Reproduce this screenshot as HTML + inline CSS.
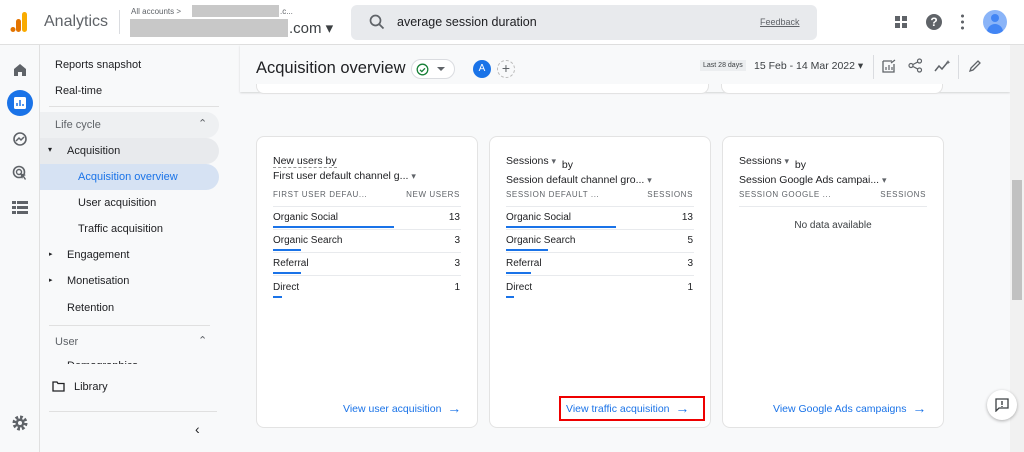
<!DOCTYPE html><html><head><style>
*{box-sizing:border-box;margin:0;padding:0}
body{width:1024px;height:452px;overflow:hidden;font-family:"Liberation Sans",Arial,sans-serif;background:#f8f9fa;position:relative;color:#202124}
.abs{position:absolute}
.hdr{left:0;top:0;width:1024px;height:45px;background:#fff;border-bottom:1px solid #e0e0e0}
.rail{left:0;top:45px;width:40px;height:407px;background:#f8f9fa;border-right:1px solid #e0e0e0}
.side{left:40px;top:45px;width:200px;height:407px;background:#f8f9fa}
.side div.it{position:absolute;font-size:11px;color:#202124}
.card{position:absolute;background:#fff;border:1px solid #e3e3e3;border-radius:8px;top:136px;width:222px;height:292px}
.t{position:absolute;font-size:10px;color:#202124}
.h{position:absolute;font-size:8px;letter-spacing:.6px;color:#5f6368}
.ln{position:absolute;height:1px;background:#e8eaed;left:16px;width:188px}
.bar{position:absolute;height:2px;background:#1a73e8;left:16px}
.lk{position:absolute;font-size:10.5px;color:#1a73e8;top:266px;line-height:12px}
.lk b{font-weight:normal;font-size:14px;line-height:12px;vertical-align:top;position:relative;top:-1px}
</style></head><body>
<div class="abs hdr"></div>
<svg class="abs" style="left:10px;top:11px" width="20" height="22"><rect x="12" y="1" width="5" height="20" rx="2.5" fill="#f9ab00"/><rect x="6" y="8" width="5" height="13" rx="2.5" fill="#e37400"/><circle cx="3" cy="18.5" r="2.5" fill="#e37400"/></svg>
<div class="abs" style="left:44px;top:13px;font-size:16px;color:#5f6368">Analytics</div>
<div class="abs" style="left:119px;top:10px;width:1px;height:24px;background:#dadce0"></div>
<div class="abs" style="left:131px;top:7px;font-size:8px;color:#5f6368">All accounts &gt;</div>
<div class="abs" style="left:192px;top:5px;width:87px;height:12px;background:#c8c8c8"></div>
<div class="abs" style="left:280px;top:7px;font-size:8px;color:#5f6368">.c...</div>
<div class="abs" style="left:130px;top:19px;width:158px;height:18px;background:#c8c8c8"></div>
<div class="abs" style="left:289px;top:19px;font-size:15px;color:#3c4043">.com ▾</div>
<div class="abs" style="left:351px;top:5px;width:466px;height:35px;background:#e8eaed;border-radius:6px"></div>
<svg class="abs" style="left:369px;top:14px" width="16" height="16"><circle cx="6.5" cy="6.5" r="5" stroke="#5f6368" stroke-width="1.7" fill="none"/><path d="M10 10l4.5 4.5" stroke="#5f6368" stroke-width="1.8"/></svg>
<div class="abs" style="left:397px;top:15px;font-size:12.5px;color:#202124">average session duration</div>
<div class="abs" style="left:760px;top:17px;font-size:9px;color:#5f6368;text-decoration:underline">Feedback</div>
<svg class="abs" style="left:895px;top:16px" width="12" height="12" fill="#5f6368"><rect width="5" height="5"/><rect x="7" width="5" height="5"/><rect y="7" width="5" height="5"/><rect x="7" y="7" width="5" height="5"/></svg>
<div class="abs" style="left:926px;top:14px;width:16px;height:16px;border-radius:50%;background:#5f6368;color:#fff;font-size:12px;font-weight:bold;text-align:center;line-height:16px">?</div>
<div class="abs" style="left:961px;top:13px;width:3px;height:18px;background:radial-gradient(circle,#5f6368 1.4px,transparent 1.6px) 0 0/3px 6px"></div>
<div class="abs" style="left:983px;top:10px;width:24px;height:24px;border-radius:50%;background:#8ab4f8;overflow:hidden"><div style="position:absolute;left:8px;top:4px;width:8px;height:8px;border-radius:50%;background:#4285f4"></div><div style="position:absolute;left:4px;top:14px;width:16px;height:12px;border-radius:8px 8px 0 0;background:#4285f4"></div></div>
<div class="abs rail"></div>
<svg class="abs" style="left:12px;top:62px" width="16" height="16"><path d="M2 7L8 2l6 5v7H10V10H6v4H2z" fill="#5f6368"/></svg>
<div class="abs" style="left:7px;top:90px;width:26px;height:26px;border-radius:50%;background:#1a73e8"><svg width="26" height="26"><rect x="7" y="7" width="12" height="12" rx="1.5" fill="#fff"/><path d="M10 16v-3M13 16v-6M16 16v-2" stroke="#1a73e8" stroke-width="1.5"/></svg></div>
<svg class="abs" style="left:12px;top:131px" width="16" height="16"><circle cx="8" cy="8" r="6" stroke="#5f6368" stroke-width="1.6" fill="none"/><path d="M4 10l3-3 2 2 3-3" stroke="#5f6368" stroke-width="1.5" fill="none"/></svg>
<svg class="abs" style="left:12px;top:165px" width="16" height="16"><circle cx="7" cy="7" r="5.5" stroke="#5f6368" stroke-width="1.6" fill="none"/><circle cx="7" cy="7" r="2.5" stroke="#5f6368" stroke-width="1.4" fill="none"/><path d="M8 8l6 2-2 1 2 3-1 1-2-3-1 2z" fill="#5f6368"/></svg>
<svg class="abs" style="left:12px;top:201px" width="16" height="14" fill="#5f6368"><rect width="16" height="3"/><rect y="5" width="16" height="3"/><rect y="10" width="16" height="3"/><rect x="4" width="1" height="13" fill="#f8f9fa"/></svg>
<svg class="abs" style="left:11px;top:414px" width="18" height="18"><circle cx="9" cy="9" r="5.5" fill="none" stroke="#5f6368" stroke-width="4" stroke-dasharray="2.5 1.8"/><circle cx="9" cy="9" r="4.5" fill="#5f6368"/><circle cx="9" cy="9" r="2" fill="#f8f9fa"/></svg>
<div class="abs side">
<div class="it" style="left:15px;top:14px">Reports snapshot</div>
<div class="it" style="left:15px;top:40px">Real-time</div>
<div style="position:absolute;left:9px;top:61px;width:170px;height:1px;background:#e0e0e0"></div>
<div style="position:absolute;left:0;top:67px;width:179px;height:26px;background:#eef0f2;border-radius:0 13px 13px 0"></div>
<div class="it" style="left:15px;top:74px;color:#5f6368">Life cycle</div><div class="it" style="left:158px;top:72px;color:#5f6368">⌃</div>
<div style="position:absolute;left:0;top:93px;width:179px;height:26px;background:#e8eaed;border-radius:0 13px 13px 0"></div>
<div class="it" style="left:8px;top:100px;font-size:8px">▾</div><div class="it" style="left:27px;top:100px">Acquisition</div>
<div style="position:absolute;left:0;top:119px;width:179px;height:26px;background:#d6e2f3;border-radius:0 13px 13px 0"></div>
<div class="it" style="left:38px;top:126px;color:#1a73e8">Acquisition overview</div>
<div class="it" style="left:38px;top:152px">User acquisition</div>
<div class="it" style="left:38px;top:178px">Traffic acquisition</div>
<div class="it" style="left:9px;top:205px;font-size:7px">▸</div><div class="it" style="left:27px;top:204px">Engagement</div>
<div class="it" style="left:9px;top:231px;font-size:7px">▸</div><div class="it" style="left:27px;top:230px">Monetisation</div>
<div class="it" style="left:27px;top:257px">Retention</div>
<div style="position:absolute;left:9px;top:280px;width:161px;height:1px;background:#e0e0e0"></div>
<div class="it" style="left:15px;top:291px;color:#5f6368">User</div><div class="it" style="left:158px;top:289px;color:#5f6368">⌃</div>
<div style="position:absolute;left:27px;top:313px;height:6px;overflow:hidden;font-size:11px;width:100px"><div style="margin-top:2px">Demographics</div></div>
<svg style="position:absolute;left:12px;top:336px" width="13" height="11"><path d="M1 1h4l1 1.5h6v7.5H1z" fill="none" stroke="#202124" stroke-width="1.3"/></svg>
<div class="it" style="left:34px;top:336px">Library</div>
<div style="position:absolute;left:9px;top:366px;width:168px;height:1px;background:#e0e0e0"></div>
<div class="it" style="left:155px;top:376px;font-size:14px">‹</div>
</div>
<div class="abs" style="left:240px;top:45px;width:770px;height:47px;background:#f8f9fa;box-shadow:0 1px 2px rgba(0,0,0,.15)"></div>
<div class="abs" style="left:256px;top:59px;font-size:16.5px;color:#202124">Acquisition overview</div>
<div class="abs" style="left:411px;top:59px;width:44px;height:20px;border:1px solid #dadce0;border-radius:10px;background:#fff"><svg style="position:absolute;left:4px;top:3px" width="13" height="13"><circle cx="6.5" cy="6.5" r="5.3" stroke="#188038" stroke-width="1.3" fill="none"/><path d="M4 6.8l1.8 1.8L9 5.3" stroke="#188038" stroke-width="1.3" fill="none"/></svg><svg style="position:absolute;left:25px;top:7px" width="8" height="5"><path d="M0 0h8L4 4z" fill="#5f6368"/></svg></div>
<div class="abs" style="left:473px;top:60px;width:18px;height:18px;border-radius:50%;background:#1a73e8;color:#fff;font-size:10px;text-align:center;line-height:18px">A</div>
<div class="abs" style="left:497px;top:60px;width:18px;height:18px;border-radius:50%;border:1px dashed #bbb;color:#5f6368;font-size:14px;text-align:center;line-height:15px">+</div>
<div class="abs" style="left:700px;top:60px;padding:2px 3px;background:#eceef0;font-size:7px;color:#3c4043">Last 28 days</div>
<div class="abs" style="left:754px;top:60px;font-size:10.5px;color:#3c4043">15 Feb - 14 Mar 2022 ▾</div>
<div class="abs" style="left:873px;top:55px;width:1px;height:24px;background:#dadce0"></div>
<svg class="abs" style="left:882px;top:59px" width="14" height="14"><path d="M1 2h9M1 2v11h11V5" stroke="#5f6368" stroke-width="1.3" fill="none"/><path d="M4 11V8M7 11V6M10 11V8M9 4l4-3" stroke="#5f6368" stroke-width="1.2"/></svg>
<svg class="abs" style="left:908px;top:58px" width="15" height="15"><circle cx="11.5" cy="3" r="2" stroke="#5f6368" fill="none" stroke-width="1.2"/><circle cx="3" cy="7.5" r="2" stroke="#5f6368" fill="none" stroke-width="1.2"/><circle cx="11.5" cy="12" r="2" stroke="#5f6368" fill="none" stroke-width="1.2"/><path d="M5 6.5l5-2.7M5 8.5l5 2.7" stroke="#5f6368" stroke-width="1.2"/></svg>
<svg class="abs" style="left:934px;top:59px" width="18" height="14"><path d="M1 12l4-5 3 3 5-6" stroke="#5f6368" stroke-width="1.5" fill="none"/><path d="M14 1l.7 1.5 1.5.7-1.5.7-.7 1.5-.7-1.5-1.5-.7 1.5-.7z" fill="#5f6368"/></svg>
<div class="abs" style="left:958px;top:55px;width:1px;height:24px;background:#dadce0"></div>
<svg class="abs" style="left:968px;top:59px" width="14" height="14"><path d="M2 12l1-3 7-7 2 2-7 7z" stroke="#5f6368" stroke-width="1.3" fill="none"/></svg>
<div class="abs" style="left:256px;top:84px;width:453px;height:10px;background:#fff;border:1px solid #e3e3e3;border-top:none;border-radius:0 0 8px 8px"></div>
<div class="abs" style="left:721px;top:84px;width:222px;height:10px;background:#fff;border:1px solid #e3e3e3;border-top:none;border-radius:0 0 8px 8px"></div>
<div class="abs" style="left:1010px;top:45px;width:14px;height:407px;background:#f1f1f1"></div>
<div class="abs" style="left:1012px;top:180px;width:10px;height:120px;background:#c1c1c1"></div>

<div class="card" style="left:256px">
<div class="t" style="left:16px;top:18px;font-size:10.5px;border-bottom:1px dashed #999">New users by</div>
<div class="t" style="left:16px;top:33px;font-size:10.5px">First user default channel g... <span style="color:#5f6368;font-size:9px">▾</span></div>
<div class="h" style="left:16px;top:53px">FIRST USER DEFAU...</div><div class="h" style="right:17px;top:53px">NEW USERS</div>
<div class="ln" style="top:69px"></div>
<div class="t" style="left:16px;top:75px">Organic Social</div><div class="t" style="right:17px;top:75px">13</div><div class="bar" style="top:89px;width:121px"></div>
<div class="ln" style="top:92px"></div>
<div class="t" style="left:16px;top:98px">Organic Search</div><div class="t" style="right:17px;top:98px">3</div><div class="bar" style="top:112px;width:28px"></div>
<div class="ln" style="top:115px"></div>
<div class="t" style="left:16px;top:121px">Referral</div><div class="t" style="right:17px;top:121px">3</div><div class="bar" style="top:135px;width:28px"></div>
<div class="ln" style="top:138px"></div>
<div class="t" style="left:16px;top:145px">Direct</div><div class="t" style="right:17px;top:145px">1</div><div class="bar" style="top:159px;width:9px"></div>
<div class="lk" style="left:86px">View user acquisition &nbsp;<b>→</b></div>
</div>
<div class="card" style="left:489px">
<div class="t" style="left:16px;top:18px;font-size:10.5px">Sessions <span style="color:#5f6368;font-size:9px">▾</span> &nbsp;<span style="position:relative;top:4px">by</span></div>
<div class="t" style="left:16px;top:37px;font-size:10.5px">Session default channel gro... <span style="color:#5f6368;font-size:9px">▾</span></div>
<div class="h" style="left:16px;top:53px">SESSION DEFAULT ...</div><div class="h" style="right:17px;top:53px">SESSIONS</div>
<div class="ln" style="top:69px"></div>
<div class="t" style="left:16px;top:75px">Organic Social</div><div class="t" style="right:17px;top:75px">13</div><div class="bar" style="top:89px;width:110px"></div>
<div class="ln" style="top:92px"></div>
<div class="t" style="left:16px;top:98px">Organic Search</div><div class="t" style="right:17px;top:98px">5</div><div class="bar" style="top:112px;width:42px"></div>
<div class="ln" style="top:115px"></div>
<div class="t" style="left:16px;top:121px">Referral</div><div class="t" style="right:17px;top:121px">3</div><div class="bar" style="top:135px;width:25px"></div>
<div class="ln" style="top:138px"></div>
<div class="t" style="left:16px;top:145px">Direct</div><div class="t" style="right:17px;top:145px">1</div><div class="bar" style="top:159px;width:8px"></div>
<div class="lk" style="left:76px">View traffic acquisition &nbsp;<b>→</b></div>
<div style="position:absolute;left:69px;top:259px;width:146px;height:25px;border:2px solid #e00"></div>
</div>
<div class="card" style="left:722px">
<div class="t" style="left:16px;top:18px;font-size:10.5px">Sessions <span style="color:#5f6368;font-size:9px">▾</span> &nbsp;<span style="position:relative;top:4px">by</span></div>
<div class="t" style="left:16px;top:37px;font-size:10.5px">Session Google Ads campai... <span style="color:#5f6368;font-size:9px">▾</span></div>
<div class="h" style="left:16px;top:53px">SESSION GOOGLE ...</div><div class="h" style="right:17px;top:53px">SESSIONS</div>
<div class="ln" style="top:69px"></div>
<div class="t" style="left:0;width:220px;text-align:center;top:83px;color:#3c4043">No data available</div>
<div class="lk" style="left:50px">View Google Ads campaigns &nbsp;<b>→</b></div>
</div>
<div class="abs" style="left:987px;top:390px;width:30px;height:30px;border-radius:50%;background:#fff;box-shadow:0 1px 3px rgba(0,0,0,.3)"><svg style="position:absolute;left:8px;top:8px" width="14" height="14"><path d="M1 1h12v9H4l-3 3z" stroke="#3c4043" stroke-width="1.3" fill="none"/><path d="M7 3v4M7 8v1" stroke="#3c4043" stroke-width="1.4"/></svg></div>
</body></html>
